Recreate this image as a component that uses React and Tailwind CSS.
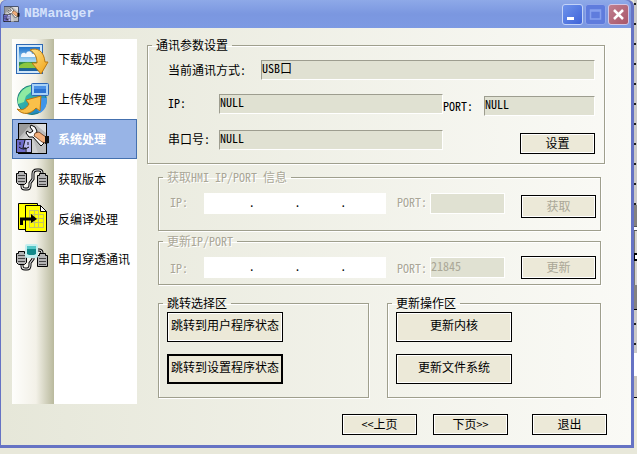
const SUNKEN =
  'block min-w-0 h-5 border-t border-l border-[#9d9d8f] border-b border-r border-b-white border-r-white bg-[#e0e1d2] leading-[13px] whitespace-nowrap';
const FIELDSET =
  'min-w-0 border border-[#9f9f8d] shadow-[1px_1px_0_#fff,inset_1px_1px_0_#fff]';
const LEGEND = 'ml-1 px-1 h-[14px] leading-[14px] whitespace-nowrap';
const BUTTON =
  'shrink-0 border border-black bg-[#ece9d8] text-center leading-[14px] whitespace-nowrap shadow-[inset_0_0_0_1px_#fff]';
const DISABLED = 'text-[#aaa797] [text-shadow:1px_1px_0_#fff]';

function DownloadIcon() {
  return (
    <svg width="34" height="34" viewBox="0 0 34 34" aria-hidden="true">
      <defs>
        <linearGradient id="sky" x1="0" y1="0" x2="0" y2="1">
          <stop offset="0" stopColor="#1b6fc9" />
          <stop offset=".6" stopColor="#a9dcf7" />
          <stop offset=".65" stopColor="#2f8a3c" />
          <stop offset="1" stopColor="#1d5fa8" />
        </linearGradient>
        <linearGradient id="gold" x1="0" y1="0" x2="1" y2="1">
          <stop offset="0" stopColor="#ffe48c" />
          <stop offset="1" stopColor="#f0a010" />
        </linearGradient>
      </defs>
      <rect x=".5" y="2.500" width="26" height="29" fill="#cfe6f8" stroke="#2d68b3" />
      <rect x="3" y="5" width="21" height="24" fill="url(#sky)" />
      <path d="M5 14c0-4 4-4 5-2 1-4 6-3 6 0 3-1 4 2 3 3H5z" fill="#fff" opacity=".9" />
      <path d="M3 24c6-5 12-4 21 0v2H3z" fill="#8cc63f" />
      <path d="M14 8c7-3 14 1 15 12h3l-7 12-9-11h5c0-6-2-10-7-13z" fill="url(#gold)" stroke="#b87812" />
    </svg>
  );
}

function UploadIcon() {
  return (
    <svg width="34" height="34" viewBox="0 0 34 34" aria-hidden="true">
      <defs>
        <linearGradient id="sea" x1="0" y1="0" x2="1" y2="1">
          <stop offset="0" stopColor="#4fd08a" />
          <stop offset=".5" stopColor="#2aa7b0" />
          <stop offset="1" stopColor="#1d6fd0" />
        </linearGradient>
      </defs>
      <circle cx="16" cy="18" r="14.500" fill="url(#sea)" stroke="#1b7a78" />
      <path d="M4 12c3-5 7-7 11-8v6l-5 4-2 6-6 2c-1-4 0-7 2-10z" fill="#8eeaa2" />
      <path d="M25 16h6c0 8-2 12-7 15l-3-3z" fill="#3f95ea" />
      <rect x="15.500" y="1.500" width="17" height="12" rx="1" fill="#a8d2f6" stroke="#2b66b5" />
      <rect x="18" y="4" width="12" height="7" fill="#2a72d2" />
      <path d="M18 4h12v3H18z" fill="#4b92e6" />
      <path d="M1 27c5 2 9 0 12-5l-3-4 15-4-1 15-4-3c-5 6-13 8-19 1z" fill="#f9c04a" stroke="#b9730d" />
    </svg>
  );
}

function SystemIcon({ size = 34 }) {
  return (
    <svg width={size} height={size} viewBox="0 0 34 34" className="shrink-0" aria-hidden="true">
      <rect x="2.500" y="1.500" width="28" height="30" fill="#bdbdbd" stroke="#000" />
      <path d="M3 2h12L3 16z" fill="#9a9a9a" />
      <path d="M19 2h11v9z" fill="#dedede" />
      <path d="M5 17L14 8l8 23h-6z" fill="#cfcfcf" />
      <path d="M15 3l4 2 2 4-1 3 8 9-3 3-8-9-4 0-3-4 1-2 3 2 3-2-3-4z" fill="#fafafa" stroke="#000" />
      <path d="M19 11l4-1 4 3 3 2v6l-4-1-5-4-3-2z" fill="#f4b07c" stroke="#5b3015" strokeWidth=".8" />
      <path d="M29 14h4v7l-4 1z" fill="#111" />
      <rect x=".5" y="17.500" width="15" height="13" fill="#6e6bc9" stroke="#111" />
      <path d="M9 18h6v12H9l1-4H7z" fill="#b9b8f2" />
      <path d="M4 20v3M12 20v3M3 25q4 4 10 0M9 18l-2 8h3v4" fill="none" stroke="#111" />
    </svg>
  );
}

function PortsIcon({ screen = false }) {
  const cable = 'M6 23v1q0 3 3 3h2q3 0 3-4v-2l3-4v-5q0-4 4-4h2q3 0 3 3v2';
  return (
    <svg width="34" height="34" viewBox="0 0 34 34" aria-hidden="true">
      <path d={cable} fill="none" stroke="#000" strokeWidth="3" />
      <path d={cable} fill="none" stroke="#e4e4e4" strokeWidth="1.100" />
      <path d="M2.500 9.500h6v2h2v9l-2 2h-6l-2-2v-9h2z" fill="#b4b4b4" stroke="#000" />
      <path d="M23.500 11.500h6v2h2v11h-10v-11h2z" fill="#b4b4b4" stroke="#000" />
      <path d="M2 13.500h7M2 16.500h7M2 19.500h7M23 16.500h7M23 19.500h7M23 22.500h7" stroke="#444" />
      {screen && (
        <>
          <rect x="9" y="2" width="13" height="14" rx="2" fill="#c4eeee" />
          <path d="M11 4h9v8l-2 1h-5l-2-1z" fill="#128a8a" />
          <path d="M11 4h9v3h-9z" fill="#55c6c6" />
        </>
      )}
    </svg>
  );
}

function DecompileIcon() {
  return (
    <svg width="34" height="34" viewBox="0 0 34 34" aria-hidden="true">
      <path d="M2.500 1.500h19v26h-19z" fill="#ff0" stroke="#000" />
      <path d="M9.500 3.500h15l6 6v20h-21z" fill="#ff0" stroke="#000" />
      <path d="M24.500 3.500v6h6z" fill="#fff" stroke="#000" />
      <path d="M13 8.500h10M13 12.500h14M13 16.500h14M13 20.500h14M13 25.500h14M13.500 8v18M18.500 8v18M22.500 8v18M27.500 12v14" fill="none" stroke="#c4c468" />
      <path d="M5.500 23v-6h11" fill="none" stroke="#000" strokeWidth="3" />
      <path d="M15 12l6 5-6 4z" fill="#000" />
    </svg>
  );
}

const NAV = [
  { label: '下载处理', icon: <DownloadIcon /> },
  { label: '上传处理', icon: <UploadIcon /> },
  { label: '系统处理', icon: <SystemIcon />, active: true },
  { label: '获取版本', icon: <PortsIcon /> },
  { label: '反编译处理', icon: <DecompileIcon /> },
  { label: '串口穿透通讯', icon: <PortsIcon screen /> },
];

function TitleBar() {
  return (
    <header className="flex h-7 items-center rounded-t-md bg-linear-to-b from-[#8ea9e8] via-[#7b97e0] to-[#7d9ae3] pr-[2px] pl-[2px]">
      <SystemIcon size={17} />
      <h1 className="ml-1 flex-1 font-['Liberation_Mono',monospace] text-[13px] leading-4 font-bold text-[#d5e2fb]">
        NBManager
      </h1>
      <div className="flex gap-[2px]">
        <button aria-label="Minimize" className="h-[21px] w-[21px] rounded-[3px] border border-[#c3d3f8] bg-linear-to-br from-[#6f93ec] to-[#3f63d8]">
          <svg width="19" height="19" viewBox="0 0 19 19" aria-hidden="true">
            <path d="M4 12h7v3H4z" fill="#fff" />
          </svg>
        </button>
        <button aria-label="Maximize" disabled className="h-[21px] w-[21px] rounded-[3px] border border-[#8fa5ea] bg-[#5f7cdd]">
          <svg width="19" height="19" viewBox="0 0 19 19" aria-hidden="true">
            <path d="M4.500 5h10v9h-10zM4 6h11" fill="none" stroke="#86a0ee" strokeWidth="1.500" />
          </svg>
        </button>
        <button aria-label="Close" className="h-[21px] w-[21px] rounded-[3px] border border-[#d3c6e4] bg-linear-to-br from-[#c07f8f] to-[#a8566a]">
          <svg width="19" height="19" viewBox="0 0 19 19" aria-hidden="true">
            <path d="M5 5l9 9M14 5l-9 9" stroke="#fff" strokeWidth="2.500" />
          </svg>
        </button>
      </div>
    </header>
  );
}

function Sidebar() {
  return (
    <nav className="mt-px w-[125px] shrink-0 bg-white bg-linear-to-r from-[#fefefc] from-0% via-[#f3f1e8] via-[24px] to-[#b9b99d] to-[42px] bg-[length:42px_100%] bg-no-repeat">
      {NAV.map((item) => (
        <button
          key={item.label}
          className={
            item.active
              ? 'flex h-10 w-full items-center gap-2 border border-[#4470ae] bg-[#98b4e6] pl-[3px] font-bold whitespace-nowrap text-white'
              : 'flex h-10 w-full items-center gap-2 border border-transparent pl-[3px] whitespace-nowrap'
          }
        >
          {item.icon}
          {item.label}
        </button>
      ))}
    </nav>
  );
}

function IpInput({ label }) {
  return (
    <div role="group" aria-label={label} className="grid h-[21px] min-w-0 flex-1 grid-cols-[46fr_46fr_46fr_40fr] bg-white pl-[5px] text-black">
      {[1, 2, 3, 4].map((n) => (
        <span key={n} className="flex min-w-0 items-center">
          <input aria-label={`${label} ${n}`} disabled className="h-full w-full min-w-0 bg-transparent text-center" />
          {n < 4 && <span className="pb-1 leading-[14px]">.</span>}
        </span>
      ))}
    </div>
  );
}

function AddressGroup({ title, id, port, action, rowClass }) {
  return (
    <fieldset disabled className={`mr-[6px] ml-[11px] ${FIELDSET} ${DISABLED}`}>
      <legend className={LEGEND}>{title}</legend>
      <div className={`flex pr-1 pl-[11px] ${rowClass}`}>
        <span className="w-[34px] shrink-0 leading-[18px]">IP:</span>
        <IpInput label={`${title} IP`} />
        <label htmlFor={id} className="ml-[11px] w-[33px] shrink-0 leading-[18px]">PORT:</label>
        <input id={id} defaultValue={port} className="h-[21px] w-[75px] shrink-0 border border-white bg-[#e0e1d2] pb-[5px] text-[12px] leading-[14px]" />
        <button className={`ml-4 h-[23px] w-[75px] pb-0.5 ${BUTTON}`}>{action}</button>
      </div>
    </fieldset>
  );
}

function ActionGroup({ title, actions }) {
  return (
    <fieldset className={FIELDSET}>
      <legend className={LEGEND}>{title}</legend>
      <div className="flex flex-col items-start gap-3 pt-0.5 pb-[13px] pl-2">
        {actions.map((a) => (
          <button
            key={a.label}
            className={`h-[30px] w-[116px] pb-1 ${BUTTON} ${a.focused ? 'outline outline-offset-[-2px] outline-black' : ''}`}
          >
            {a.label}
          </button>
        ))}
      </div>
    </fieldset>
  );
}

function DesktopEdge() {
  return (
    <div aria-hidden="true" className="flex w-[3px] shrink-0 flex-col bg-[#cbc9c8]">
      <div className="h-[205px] bg-[radial-gradient(circle_at_1px_4px,#222_1px,transparent_1px)] bg-[length:3px_20px]" />
      <div className="h-[21px] bg-[#85827f]" />
      <div className="h-[5px] border-y border-[#555] bg-white" />
      <div className="h-[22px] border-l border-[#777] bg-[#d6d3cd]" />
      <div className="h-[8px] border-y-2 border-l border-black bg-white" />
      <div className="h-[24px] border-l border-[#777] bg-[#d6d3cd]" />
      <div className="h-[25px] border-b border-black bg-[#85827f]" />
      <div className="h-[43px] bg-[radial-gradient(circle_at_1px_14px,#222_1px,transparent_1px)] bg-[length:3px_20px]" />
      <div className="h-[23px] bg-white" />
      <div className="h-[22px] border-b border-black bg-[#cbc5bd]" />
      <div className="flex-1 bg-[#ece9d8]" />
    </div>
  );
}

export default function App() {
  return (
    <div className="min-h-screen bg-[#e8e8da] font-['Noto_Sans_Mono_CJK_SC','Noto_Sans_CJK_SC',sans-serif] text-[12px] leading-[14px] text-black">
      <div className="flex">
        <main className="min-w-0 flex-1 rounded-t-md border-r-[3px] border-b-[3px] border-l border-[#6673c4] bg-[#6673c4]">
          <TitleBar />
          <div className="bg-linear-to-r from-[#e6e7d9] to-[#fafaf6] pb-[10px]">
            <div className="flex gap-[10px] pt-[10px] pr-[24px] pl-[11px]">
              <Sidebar />
              <div className="min-w-0 flex-1 pb-[6px]">
                <fieldset className={`mr-[2px] ${FIELDSET}`}>
                  <legend className={LEGEND}>通讯参数设置</legend>
                  <div className="flex flex-col gap-[14px] pt-2 pr-[9px] pb-[9px] pl-5">
                    <div className="flex items-center">
                      <label htmlFor="mode" className="w-[93px] shrink-0">当前通讯方式:</label>
                      <output id="mode" className={`flex-1 ${SUNKEN}`}>USB口</output>
                    </div>
                    <div className="flex h-[22px] items-start">
                      <label htmlFor="ip" className="w-[51px] shrink-0 leading-[18px]">IP:</label>
                      <output id="ip" className={`flex-1 ${SUNKEN}`}>NULL</output>
                      <label htmlFor="port" className="w-[41px] shrink-0 self-end leading-5">PORT:</label>
                      <output id="port" className={`w-[111px] shrink-0 self-end ${SUNKEN}`}>NULL</output>
                    </div>
                    <div className="flex h-6 items-start">
                      <label htmlFor="serial" className="w-[51px] shrink-0 leading-[18px]">串口号:</label>
                      <output id="serial" className={`flex-1 ${SUNKEN}`}>NULL</output>
                      <button className={`ml-[77px] h-[21px] w-[75px] self-end pb-0.5 ${BUTTON}`}>设置</button>
                    </div>
                  </div>
                </fieldset>
                <div className="mt-[6px] flex flex-col gap-[3px]">
                  <AddressGroup title="获取HMI IP/PORT 信息" id="get-port" port="" action="获取" rowClass="items-start pt-[9px] pb-[12px] [&>button]:mt-0.5" />
                  <AddressGroup title="更新IP/PORT" id="set-port" port="21845" action="更新" rowClass="items-center pt-2 pb-[5px]" />
                </div>
                <div className="mt-[11px] mr-[6px] ml-[11px] grid grid-cols-[211fr_214fr] gap-[18px]">
                  <ActionGroup
                    title="跳转选择区"
                    actions={[{ label: '跳转到用户程序状态' }, { label: '跳转到设置程序状态', focused: true }]}
                  />
                  <ActionGroup title="更新操作区" actions={[{ label: '更新内核' }, { label: '更新文件系统' }]} />
                </div>
              </div>
            </div>
            <footer className="flex justify-end pt-[10px] pr-[24px]">
              <button className={`h-[21px] w-[75px] pb-0.5 ${BUTTON}`}>&lt;&lt;上页</button>
              <button className={`ml-4 h-[21px] w-[75px] pb-0.5 ${BUTTON}`}>下页&gt;&gt;</button>
              <button className={`ml-6 h-[21px] w-[75px] pb-0.5 ${BUTTON}`}>退出</button>
            </footer>
          </div>
        </main>
        <DesktopEdge />
      </div>
    </div>
  );
}
